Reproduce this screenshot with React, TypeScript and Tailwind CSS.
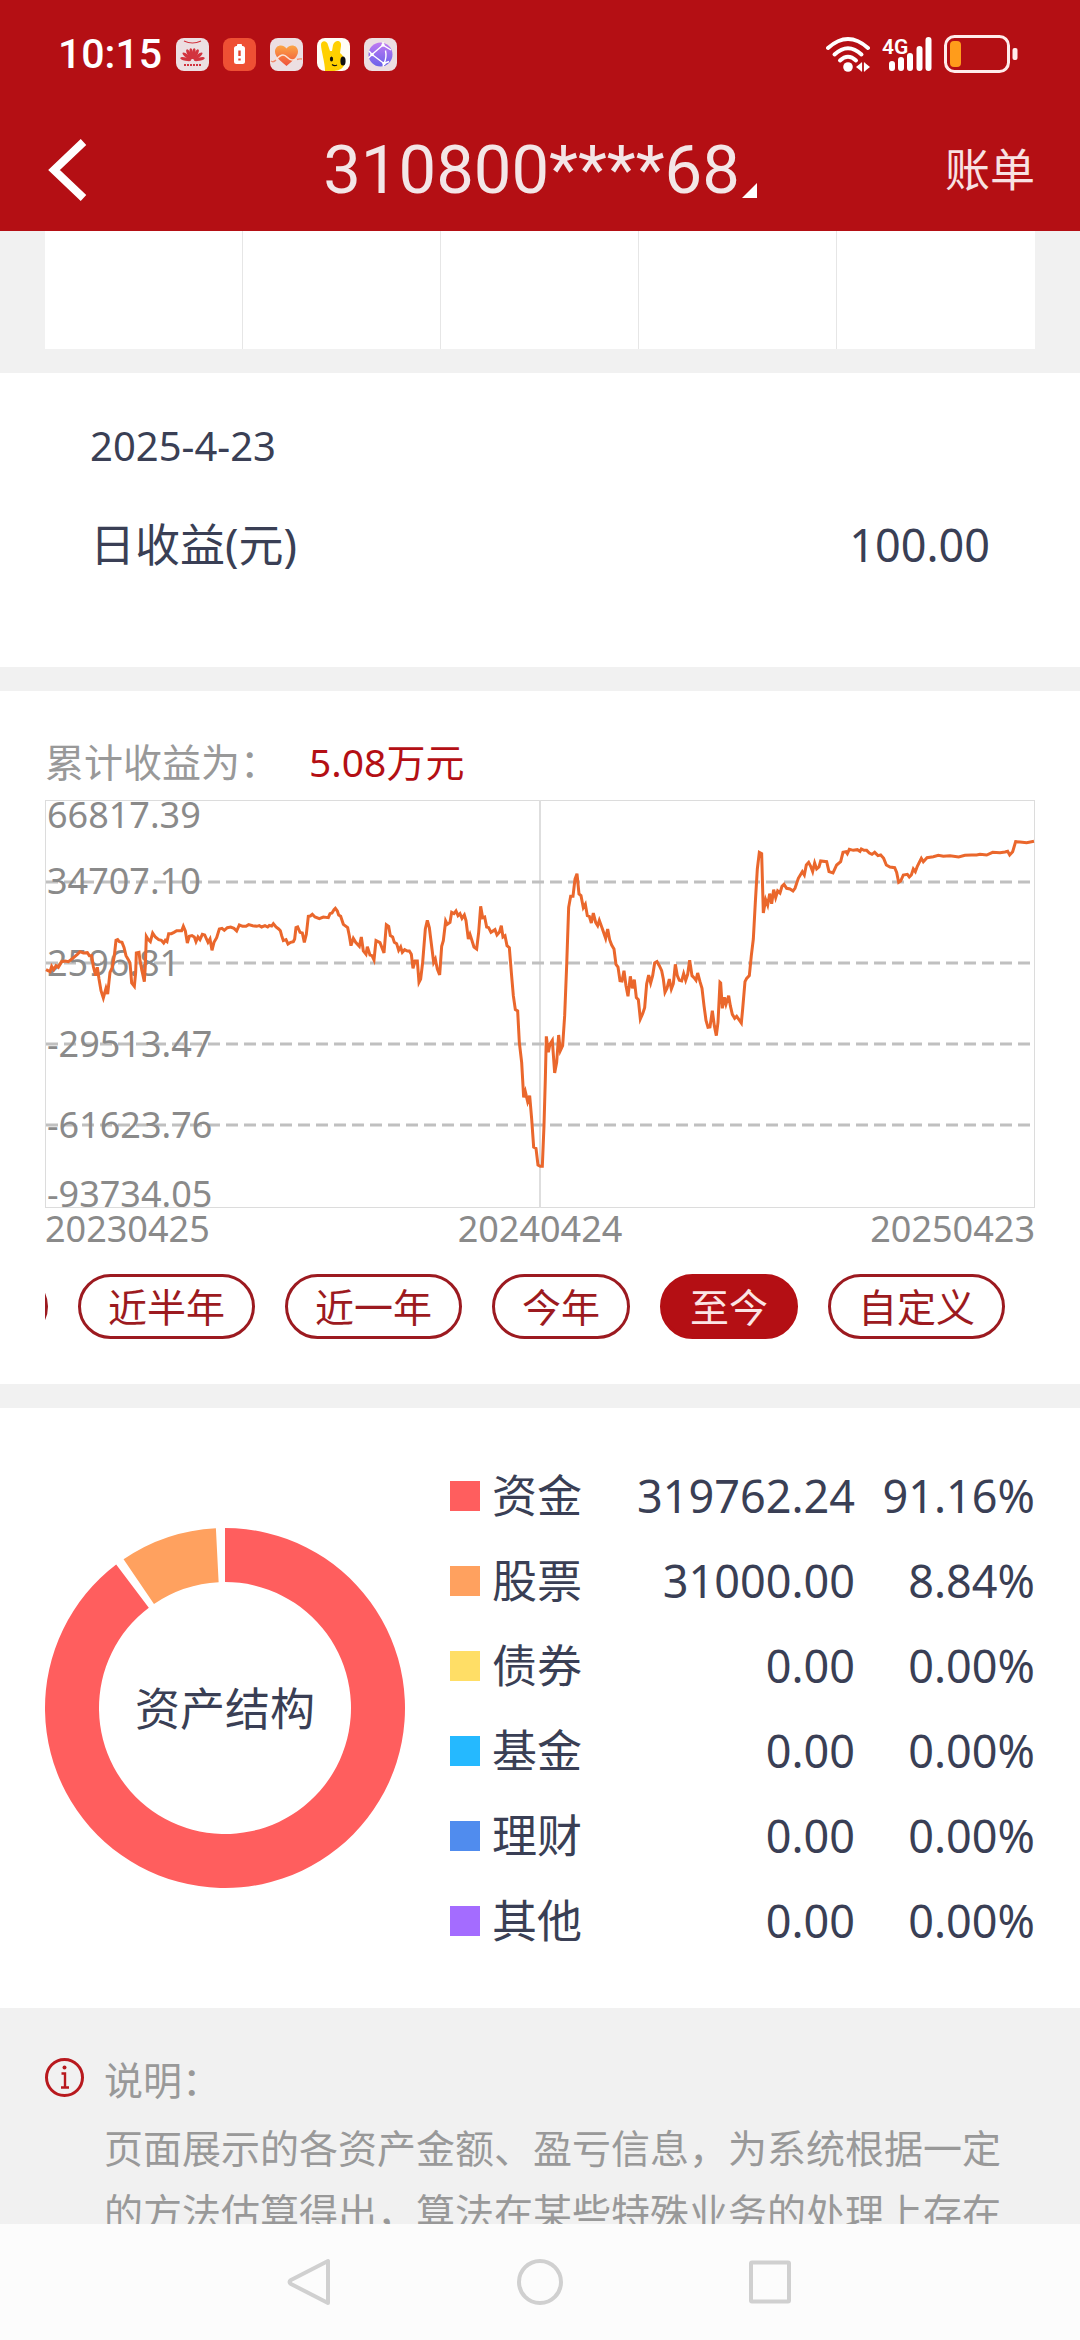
import { ReactNode } from "react";

const assets = [
  { name: "资金", amount: "319762.24", percent: "91.16%", color: "bg-[#ff5e5e]" },
  { name: "股票", amount: "31000.00", percent: "8.84%", color: "bg-[#ffa15f]" },
  { name: "债券", amount: "0.00", percent: "0.00%", color: "bg-[#ffde66]" },
  { name: "基金", amount: "0.00", percent: "0.00%", color: "bg-[#25b9ff]" },
  { name: "理财", amount: "0.00", percent: "0.00%", color: "bg-[#508cee]" },
  { name: "其他", amount: "0.00", percent: "0.00%", color: "bg-[#a46cff]" },
];

const ranges = ["近半年", "近一年", "今年", "至今", "自定义"];

const yLabels = [
  { text: "66817.39", y: 28 },
  { text: "34707.10", y: 94 },
  { text: "2596.81", y: 176 },
  { text: "-29513.47", y: 257 },
  { text: "-61623.76", y: 338 },
  { text: "-93734.05", y: 407 },
];

const gridLines = [82, 163, 244, 325];

const petals = [-78, -52, -28, -9, 9, 28, 52, 78];

// profit curve, three units per chart pixel
const curve =
  "138,572 150,578 155,562 161,572 168,560 175,565 185,548 195,546 205,548 218,538 232,526 240,518 250,522 262,521 268,530 275,530 280,562 287,590 292,565 297,600 303,635 310,657 318,628 323,645 330,580 337,565 343,530 348,484 353,482 358,488 366,490 372,505 378,530 385,542 390,552 395,612 403,622 407,580 409,522 417,520 420,545 427,580 433,608 436,560 439,472 445,482 451,488 458,462 466,474 476,482 484,484 491,492 496,484 501,488 506,464 514,464 522,460 530,455 545,455 550,442 556,456 562,492 568,472 576,470 583,474 588,488 594,474 600,482 607,466 614,468 624,490 630,480 636,514 642,490 650,476 658,450 666,448 673,454 682,446 692,444 702,448 710,456 718,438 728,442 738,442 746,437 758,440 770,442 778,440 785,444 795,440 803,444 808,439 815,441 820,434 828,444 836,450 841,455 845,470 850,485 858,482 864,495 872,490 880,488 884,480 888,446 893,444 900,460 907,462 913,490 919,466 925,412 931,411 937,406 945,414 958,419 970,414 985,416 990,404 996,402 1002,392 1006,388 1012,396 1016,408 1022,412 1030,436 1043,446 1048,470 1053,500 1060,478 1067,490 1078,502 " +
  "1084,474 1090,516 1098,526 1102,503 1110,528 1116,530 1122,543 1128,485 1140,491 1152,522 1159,437 1166,442 1171,470 1178,474 1183,490 1190,494 1196,514 1202,504 1207,520 1214,512 1222,516 1228,516 1234,526 1239,568 1245,546 1252,546 1257,610 1262,600 1268,550 1276,450 1282,424 1288,446 1296,510 1301,550 1306,540 1312,570 1319,588 1325,502 1330,485 1337,426 1342,436 1350,430 1355,400 1362,404 1368,396 1374,410 1380,404 1386,418 1393,408 1398,425 1405,480 1410,466 1422,504 1430,510 1436,460 1442,382 1448,416 1454,414 1460,444 1466,446 1473,460 1485,452 1491,468 1498,460 1504,440 1509,474 1515,470 1521,500 1528,506 1534,580 1540,650 1546,692 1553,696 1558,790 1565,850 1571,955 1576,938 1583,968 1589,950 1595,1020 1601,1104 1608,1108 1614,1158 1621,1162 1627,1162 1632,1040 1636,900 1639,772 1645,820 1650,795 1657,784 1664,882 1670,850 1676,768 1681,815 1688,800 1694,710 1700,560 1706,385 1712,352 1719,352 1725,300 1731,284 1737,345 1743,350 1750,386 1756,376 1762,410 1768,412 1774,432 1780,402 1787,430 1793,440 1798,424 1806,446 1817,478 1823,450 1829,482 1835,498 1842,510 1848,556 1854,564 1860,605 1866,606 1872,575 1878,620 1884,652 1891,592 1897,628 1903,602 1909,656 1915,662 1921,720 1928,704 1934,686 1940,615 1946,588 1952,612 1958,590 1964,552 1971,548 1978,560 1985,575 1990,600 1995,640 2001,628 2008,600 2014,630 2020,614 2026,556 2032,590 2038,604 2045,606 2051,584 2057,604 2063,586 2069,544 2076,590 2082,596 2088,604 2093,582 2100,608 2106,628 2112,680 2118,724 2124,745 2130,744 2137,695 2143,740 2149,770 2154,730 2160,610 " +
  "2162,612 2167,688 2173,655 2178,676 2186,650 2191,680 2197,706 2204,718 2210,712 2217,722 2224,732 2228,690 2235,608 2240,598 2248,590 2254,530 2260,480 2266,370 2272,270 2278,220 2285,224 2290,402 2297,362 2303,378 2309,344 2315,374 2321,332 2327,356 2333,336 2340,342 2346,322 2352,316 2360,328 2370,330 2379,336 2385,328 2395,298 2407,278 2413,288 2419,258 2426,250 2432,262 2438,278 2444,252 2450,270 2457,264 2462,246 2480,248 2487,278 2499,282 2510,258 2522,248 2529,220 2538,218 2542,224 2548,211 2560,214 2572,212 2580,217 2584,210 2592,214 2600,214 2608,222 2616,226 2624,220 2634,230 2642,228 2651,238 2659,258 2670,264 2684,266 2690,280 2696,310 2702,306 2710,288 2722,286 2728,294 2734,288 2740,270 2746,278 2752,262 2764,238 2770,248 2781,236 2800,233 2815,229 2830,232 2850,230 2876,234 2895,229 2915,228 2930,228 2940,226 2960,228 2978,220 3000,221 3015,219 3023,217 3029,228 3038,218 3047,188 3060,189 3080,191 3102,187";

function AppIcon({ children }: { children: ReactNode }) {
  return (
    <svg viewBox="0 0 33 33" className="size-[33px] rounded-lg" aria-hidden="true">
      {children}
    </svg>
  );
}

function StatusBar() {
  return (
    <div className="flex h-[108px] items-center justify-between pl-[58px] pr-[62px]">
      <div className="flex items-center gap-[14px]">
        <span className="font-[Roboto,sans-serif] text-[41px] font-medium leading-none">10:15</span>
        <AppIcon>
          <rect width="33" height="33" fill="#ecdfe2" />
          <path d="M8 3q8.500 4 17 0" fill="none" stroke="#d2343f" strokeWidth="1.200" />
          <g fill="#d2343f">
            {petals.map((angle) => (
              <ellipse key={angle} cx="16.500" cy="15.500" rx="1.700" ry="5.500" transform={`rotate(${angle} 16.500 22.500)`} />
            ))}
          </g>
          <path d="M8 27h17" stroke="#d2343f" strokeWidth="2" strokeDasharray="2 1" />
        </AppIcon>
        <AppIcon>
          <rect width="33" height="33" fill="#ee5034" />
          <rect x="14" y="6" width="5" height="3" rx="1" fill="#fff" />
          <rect x="11" y="8" width="11" height="18" rx="2.500" fill="#fff" />
          <path d="M16.500 12.500v5.500M16.500 20.500v2" stroke="#e5452e" strokeWidth="2.400" />
        </AppIcon>
        <AppIcon>
          <defs>
            <linearGradient id="heart" x1="0" y1="0" x2="0" y2="1">
              <stop offset="0" stopColor="#fba546" />
              <stop offset="1" stopColor="#f0503a" />
            </linearGradient>
          </defs>
          <rect width="33" height="33" fill="#ecdfe2" />
          <path d="M16.500 28C9 22 5 18 5 13.500 5 7 13 5.500 16.500 10.500 20 5.500 28 7 28 13.500 28 18 24 22 16.500 28z" fill="url(#heart)" />
          <path d="M1 23c5 3 6-6 12-6 4 0 5 5 9 5 3 0 4-2 10-1" fill="none" stroke="#fbe3d8" strokeWidth="1.600" />
          <path d="M1 23c2 1.500 4 0 5-1M27 21.500q2-1 5-.5" fill="none" stroke="#ee8a70" strokeWidth="1.400" />
        </AppIcon>
        <AppIcon>
          <rect width="33" height="33" fill="#fffef6" />
          <path d="M8 33C8 25 4 12 4 7c0-5 6-5 7 0l2 6h2l1-6c2-6 9-5 8 1l-1 7c5 4 6 10 3 14-2 3-7 4-10 4z" fill="#ffd000" />
          <ellipse cx="14.500" cy="21" rx="1.600" ry="2.600" fill="#111" />
          <ellipse cx="26" cy="23" rx="2.600" ry="4.500" fill="#111" />
          <path d="M15 26.500q2.500 2 5 .5" fill="none" stroke="#111" strokeWidth="1.200" />
        </AppIcon>
        <AppIcon>
          <defs>
            <linearGradient id="globe" x1="0" y1="0" x2="0" y2="1">
              <stop offset="0" stopColor="#c07af2" />
              <stop offset="1" stopColor="#6a63ea" />
            </linearGradient>
          </defs>
          <rect width="33" height="33" fill="#ecdfe2" />
          <circle cx="16.500" cy="16.500" r="12" fill="url(#globe)" />
          <path d="M8 16.500 19 7M8 16.500l12 9M21.500 12.500q1.500 7-1.500 13M5 13l3 3.500L4.500 20M19 4v3l8 5M20 25.500l5-2M20 25.500l-1 3" fill="none" stroke="#fff" strokeWidth="1.400" />
          <g fill="#fff">
            <circle cx="8" cy="16.500" r="1.700" />
            <circle cx="19" cy="7" r="1.700" />
            <circle cx="20" cy="25.500" r="1.700" />
          </g>
        </AppIcon>
      </div>

      <div className="flex items-center gap-3">
        <svg viewBox="0 0 44 36" className="h-9 w-11" aria-hidden="true">
          <g fill="none" stroke="#fff" strokeWidth="4" strokeLinecap="round">
            <path d="M2 12Q22-6 42 12" />
            <path d="M8.500 18.500Q22 6 35.500 18.500" />
            <path d="M14 24.500Q22 17 30 24.500" />
          </g>
          <circle cx="22" cy="31" r="4.800" fill="#fff" />
          <path d="M30 31l5-4v8zM44 31l-5-4v8z" fill="#fff" />
          <path d="M35.500 26.500v9M38.500 26.500v9" stroke="#fff" strokeWidth="1.200" />
        </svg>
        <svg viewBox="0 0 50 36" className="h-9 w-[50px] overflow-visible" aria-hidden="true">
          <text x="0" y="18" fill="#fff" fontSize="21" fontWeight="600" className="font-[Roboto,sans-serif]">
            4G
          </text>
          <g stroke="#fff" strokeWidth="6" strokeLinecap="round">
            <path d="M10 28v4M19 24v8M28 20v12M37.500 13v19M46.500 4v28" />
          </g>
        </svg>
        <svg viewBox="0 0 74 38" className="h-[38px] w-[74px]" aria-hidden="true">
          <rect x="1.500" y="1.500" width="63" height="35" rx="9" fill="none" stroke="#ffeceb" strokeWidth="3" />
          <rect x="6" y="6" width="11" height="26" rx="4" fill="#ff9c1b" />
          <rect x="68.500" y="13" width="5" height="12" rx="2" fill="#ffeceb" />
        </svg>
      </div>
    </div>
  );
}

function ProfitChart() {
  return (
    <figure>
      <svg viewBox="0 0 990 408" className="w-full overflow-visible" role="img" aria-label="累计收益">
        <rect x="0.500" y="0.500" width="989" height="407" fill="none" stroke="#dcdcdc" />
        <path d="M495 0v408" stroke="#dedede" strokeWidth="2" />
        {gridLines.map((y) => (
          <path key={y} d={`M1 ${y}H989`} stroke="#c0c0c0" strokeWidth="3" strokeDasharray="12 6" />
        ))}
        <g fill="#8a8a8a" fontSize="36">
          {yLabels.map(({ text, y }) => (
            <text key={text} x="2" y={y}>
              {text}
            </text>
          ))}
        </g>
        <polyline
          points={curve}
          transform="translate(-45 -21) scale(0.33333)"
          fill="none"
          stroke="#ea672c"
          strokeWidth="9"
        />
      </svg>
      <figcaption className="flex justify-between text-[36px] leading-[42px] text-[#8a8a8a]">
        <span>20230425</span>
        <span>20240424</span>
        <span>20250423</span>
      </figcaption>
    </figure>
  );
}

function point(angle: number, radius: number) {
  const rad = (angle * Math.PI) / 180;
  return `${180 + radius * Math.sin(rad)} ${180 - radius * Math.cos(rad)}`;
}

function ringSlice(from: number, to: number) {
  const large = to - from > 180 ? 1 : 0;
  return `M${point(from, 180)}A180 180 0 ${large} 1 ${point(to, 180)}L${point(to, 126)}A126 126 0 ${large} 0 ${point(from, 126)}Z`;
}

function AssetRing() {
  return (
    <div className="grid size-[360px] shrink-0 place-items-center">
      <svg viewBox="0 0 360 360" className="col-start-1 row-start-1 size-full" aria-hidden="true">
        <path d={ringSlice(0, 322.8)} fill="#ff5e5e" />
        <path d={ringSlice(325.7, 357.1)} fill="#ffa15f" />
      </svg>
      <h2 className="col-start-1 row-start-1 text-[45px] leading-none">资产结构</h2>
    </div>
  );
}

export default function App() {
  return (
    <div className="flex h-screen flex-col bg-[#f1f1f1] font-['Noto_Sans','Noto_Sans_CJK_SC',sans-serif] text-[#3a3f55]">
      <header className="bg-[#b40f14] text-white">
        <StatusBar />
        <div className="grid h-[123px] grid-cols-[1fr_auto_1fr] items-center px-[45px]">
          <button type="button" aria-label="返回" className="justify-self-start">
            <svg viewBox="0 0 42 64" className="h-16 w-[42px]" aria-hidden="true">
              <path d="M38.500 4 9 32l29.500 28" fill="none" stroke="#fff" strokeWidth="8" />
            </svg>
          </button>
          <button type="button" className="flex items-end gap-[2px]">
            <h1 className="font-[Roboto,sans-serif] text-[67px] leading-[80px] text-[#f3e6e7]">
              310800****68
            </h1>
            <svg viewBox="0 0 15 15" className="mb-3 size-[15px]" aria-hidden="true">
              <path d="M15 0v15H0z" fill="#fff" />
            </svg>
          </button>
          <a href="#bill" className="justify-self-end text-[45px] leading-none text-[#f8e2e3]">
            账单
          </a>
        </div>
      </header>

      <main className="min-h-0 flex-1 overflow-hidden">
        <div className="mx-[45px] grid h-[118px] grid-cols-5 divide-x divide-[#e6e6e6] bg-white">
          <div />
          <div />
          <div />
          <div />
          <div />
        </div>

        <section className="mt-6 bg-white px-[90px] pb-[90px] pt-[45px]">
          <p className="text-[40px] leading-[56px]">2025-4-23</p>
          <div className="mt-[39px] flex items-center justify-between text-[45px] leading-[64px]">
            <span>日收益(元)</span>
            <span>100.00</span>
          </div>
        </section>

        <section className="mt-6 bg-white px-[45px] pb-[45px] pt-[41px]">
          <p className="flex gap-[30px] pb-2 text-[39px] leading-[60px] text-[#999]">
            <span>累计收益为：</span>
            <span className="text-[#b40f14]">5.08万元</span>
          </p>
          <ProfitChart />
          <div className="mt-6 flex justify-end gap-[30px] overflow-hidden pr-[30px]">
            <span className="h-[65px] w-[177px] shrink-0 rounded-full border-3 border-[#9c1a20]" />
            {ranges.map((range) => (
              <button
                key={range}
                type="button"
                className={`h-[65px] shrink-0 rounded-full border-3 px-[27px] text-[39px] leading-[56px] ${
                  range === "至今"
                    ? "border-[#b40f14] bg-[#b40f14] text-[#fbe4e5]"
                    : "border-[#9c1a20] text-[#9c1a20]"
                }`}
              >
                {range}
              </button>
            ))}
          </div>
        </section>

        <section className="mt-6 flex items-center gap-[45px] bg-white p-[45px]">
          <AssetRing />
          <table className="flex-1 text-right text-[45px] leading-[60px]">
            <tbody>
              {assets.map((asset) => (
                <tr key={asset.name} className="h-[85px]">
                  <th scope="row" className="p-0 font-normal">
                    <span className="flex items-center gap-3">
                      <i className={`size-[30px] ${asset.color}`} />
                      {asset.name}
                    </span>
                  </th>
                  <td className="p-0">{asset.amount}</td>
                  <td className="w-[180px] p-0">{asset.percent}</td>
                </tr>
              ))}
            </tbody>
          </table>
        </section>

        <section className="flex gap-5 px-[45px] pt-10 text-[39px] leading-[64px] text-[#999]">
          <svg viewBox="0 0 39 39" className="mt-[10px] size-[39px] shrink-0" aria-hidden="true">
            <circle cx="19.500" cy="19.500" r="18" fill="none" stroke="#b8191e" strokeWidth="3" />
            <circle cx="19.500" cy="9.500" r="2" fill="#b8191e" />
            <path d="M16.500 15.500h3.500V29M16 29.500h8" fill="none" stroke="#b8191e" strokeWidth="2.400" />
          </svg>
          <div>
            <h2>说明：</h2>
            <p className="mt-1">
              页面展示的各资产金额、盈亏信息，为系统根据一定的方法估算得出，算法在某些特殊业务的处理上存在
            </p>
          </div>
        </section>
      </main>

      <footer className="flex h-[116px] shrink-0 items-center justify-center gap-[184px] bg-[#fcfcfc]">
        <button type="button" aria-label="后退">
          <svg viewBox="0 0 46 48" className="h-12 w-[46px]" aria-hidden="true">
            <path d="M41 3v42L4 26q-3-2 0-4z" fill="none" stroke="#d0d0d0" strokeWidth="4" strokeLinejoin="round" />
          </svg>
        </button>
        <button type="button" aria-label="主屏幕">
          <svg viewBox="0 0 46 48" className="h-12 w-[46px]" aria-hidden="true">
            <circle cx="23" cy="24" r="21" fill="none" stroke="#d0d0d0" strokeWidth="4" />
          </svg>
        </button>
        <button type="button" aria-label="最近任务">
          <svg viewBox="0 0 46 48" className="h-12 w-[46px]" aria-hidden="true">
            <rect x="4" y="4.500" width="38" height="39" rx="1" fill="none" stroke="#d0d0d0" strokeWidth="4" />
          </svg>
        </button>
      </footer>
    </div>
  );
}
